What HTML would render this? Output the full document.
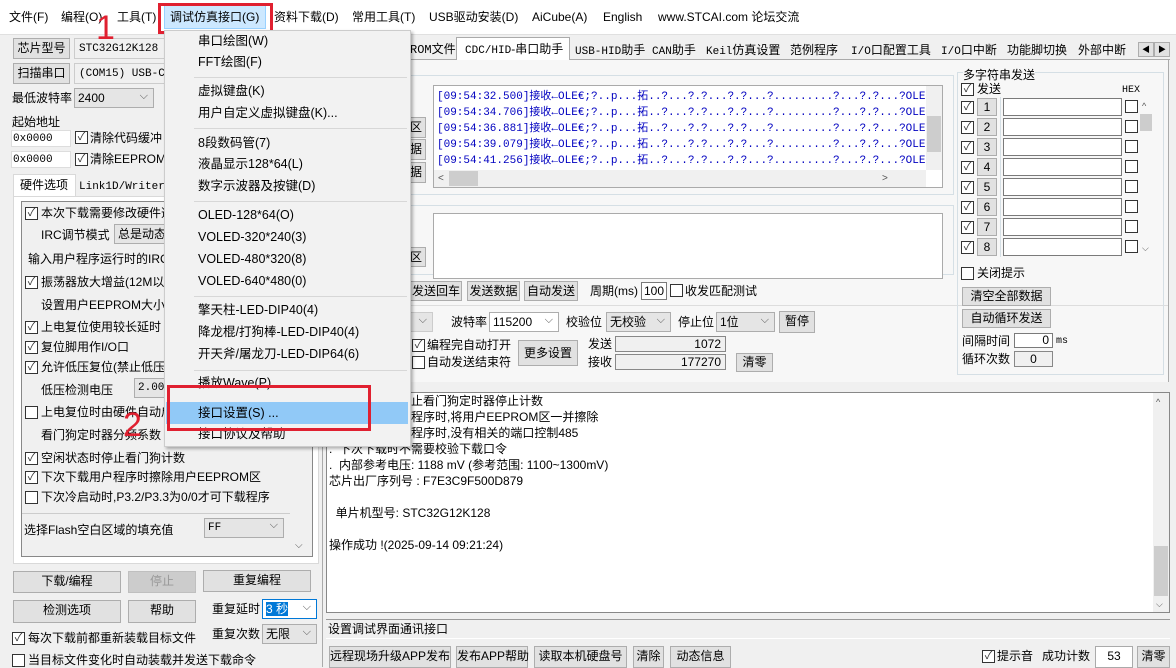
<!DOCTYPE html>
<html><head><meta charset="utf-8"><style>
*{box-sizing:border-box;margin:0;padding:0}
body{width:1176px;height:667px;overflow:hidden;background:#f0f0f0;position:relative;font:12px/16px "Liberation Sans","Noto Sans CJK SC",sans-serif;color:#000}
div,span{position:absolute;white-space:nowrap}
.t{line-height:16px}
.b{background:#e1e1e1;border:1px solid #adadad;text-align:center;line-height:18px}
.w{background:#fff;border:1px solid #7a7a7a}
.s{background:#fff;border:1px solid #adadad;padding-left:3px;line-height:18px}
.s:after{content:"⌵";position:absolute;right:5px;top:-2px;color:#555;font-size:11px}
.cb{width:13px;height:13px;border:1px solid #333;background:#fff;font-size:11px;line-height:11px;text-align:center;color:#333}
.m{font-size:12.5px;line-height:16px}
.mono{font-family:"Liberation Mono","Noto Sans CJK SC",monospace;font-size:11px}
.sep{height:1px;background:#d7d7d7;left:180px;width:226px}
.blue{color:#0000c0}
</style></head><body>
<!-- menu bar -->
<div style="left:0;top:0;width:1176px;height:34px;background:#fff"></div>
<div class="t" style="left:9px;top:9px">文件(F)</div>
<div class="t" style="left:61px;top:9px">编程(O)</div>
<div class="t" style="left:117px;top:9px">工具(T)</div>
<div style="left:164px;top:5px;width:102px;height:24px;background:#cce8ff;border:1px solid #99d1ff"></div>
<div style="left:158px;top:3px;width:115px;height:31px;border:3px solid #e02030"></div>
<div class="t" style="left:170px;top:9px">调试仿真接口(G)</div>
<div class="t" style="left:274px;top:9px">资料下载(D)</div>
<div class="t" style="left:352px;top:9px">常用工具(T)</div>
<div class="t" style="left:429px;top:9px">USB驱动安装(D)</div>
<div class="t" style="left:532px;top:9px">AiCube(A)</div>
<div class="t" style="left:603px;top:9px">English</div>
<div class="t" style="left:658px;top:9px">www.STCAI.com 论坛交流</div>
<div style="left:0;top:34px;width:1176px;height:1px;background:#e0e0e0"></div>

<!-- left panel -->
<div class="b" style="left:13px;top:38px;width:57px;height:21px">芯片型号</div>
<div class="w mono" style="left:74px;top:38px;width:100px;height:21px;background:#f0f0f0;border-color:#ccc;padding:2px 4px">STC32G12K128</div>
<div class="b" style="left:13px;top:63px;width:57px;height:21px">扫描串口</div>
<div class="w mono" style="left:74px;top:63px;width:100px;height:21px;background:#f0f0f0;border-color:#ccc;padding:2px 4px">(COM15) USB-CDC</div>
<div class="t" style="left:12px;top:90px">最低波特率</div>
<div class="s" style="left:74px;top:88px;width:80px;height:20px;background:#e5e5e5">2400</div>
<div class="t" style="left:12px;top:114px">起始地址</div>
<div class="w mono" style="left:11px;top:130px;width:60px;height:17px;border-color:#ddd;padding-left:1px">0x0000</div>
<div class="cb" style="left:75px;top:131px">✓</div><div class="t" style="left:90px;top:130px">清除代码缓冲</div>
<div class="w mono" style="left:11px;top:151px;width:60px;height:17px;border-color:#ddd;padding-left:1px">0x0000</div>
<div class="cb" style="left:75px;top:153px">✓</div><div class="t" style="left:90px;top:151px">清除EEPROM缓</div>
<div style="left:13px;top:174px;width:63px;height:23px;background:#fff;border:1px solid #d9d9d9;border-bottom:none"></div>
<div class="t" style="left:20px;top:177px">硬件选项</div>
<div class="t mono" style="left:79px;top:179px">Link1D/Writer1</div>
<div style="left:13px;top:196px;width:306px;height:368px;background:#fff;border:1px solid #d9d9d9"></div>
<div style="left:21px;top:201px;width:292px;height:356px;border:1px solid #888;background:#f0f0f0"></div>
<div class="cb" style="left:25px;top:207px">✓</div><div class="t" style="left:41px;top:205px">本次下载需要修改硬件选项</div>
<div class="t" style="left:41px;top:227px">IRC调节模式</div>
<div class="s" style="left:114px;top:224px;width:60px;height:20px;background:#e5e5e5">总是动态</div>
<div class="t" style="left:28px;top:251px">输入用户程序运行时的IRC</div>
<div class="cb" style="left:25px;top:276px">✓</div><div class="t" style="left:41px;top:274px">振荡器放大增益(12M以上)</div>
<div class="t" style="left:41px;top:297px">设置用户EEPROM大小</div>
<div class="cb" style="left:25px;top:321px">✓</div><div class="t" style="left:41px;top:319px">上电复位使用较长延时</div>
<div class="cb" style="left:25px;top:341px">✓</div><div class="t" style="left:41px;top:339px">复位脚用作I/O口</div>
<div class="cb" style="left:25px;top:361px">✓</div><div class="t" style="left:41px;top:359px">允许低压复位(禁止低压中断)</div>
<div class="t" style="left:41px;top:382px">低压检测电压</div>
<div class="s mono" style="left:134px;top:378px;width:40px;height:20px;background:#e5e5e5">2.00</div>
<div class="cb" style="left:25px;top:406px"></div><div class="t" style="left:41px;top:404px">上电复位时由硬件自动启动看门狗</div>
<div class="t" style="left:41px;top:427px">看门狗定时器分频系数</div>
<div class="cb" style="left:25px;top:452px">✓</div><div class="t" style="left:41px;top:450px">空闲状态时停止看门狗计数</div>
<div class="cb" style="left:25px;top:471px">✓</div><div class="t" style="left:41px;top:469px">下次下载用户程序时擦除用户EEPROM区</div>
<div class="cb" style="left:25px;top:491px"></div><div class="t" style="left:41px;top:489px">下次冷启动时,P3.2/P3.3为0/0才可下载程序</div>
<div style="left:22px;top:513px;width:268px;height:1px;background:#ccc"></div>
<div class="t" style="left:24px;top:522px">选择Flash空白区域的填充值</div>
<div class="s mono" style="left:204px;top:518px;width:80px;height:20px;background:#e5e5e5">FF</div>
<div class="t" style="left:295px;top:538px;font-size:10px;color:#555">⌵</div>
<div class="b" style="left:13px;top:571px;width:108px;height:22px">下载/编程</div>
<div class="b" style="left:128px;top:571px;width:68px;height:22px;background:#ccc;color:#999;border-color:#bfbfbf">停止</div>
<div class="b" style="left:203px;top:570px;width:108px;height:22px">重复编程</div>
<div class="b" style="left:13px;top:600px;width:108px;height:23px">检测选项</div>
<div class="b" style="left:128px;top:600px;width:68px;height:23px">帮助</div>
<div class="t" style="left:212px;top:601px">重复延时</div>
<div class="s" style="left:262px;top:599px;width:55px;height:20px;border-color:#0078d7"><span style="position:static;background:#0078d7;color:#fff">3 秒</span></div>
<div class="t" style="left:212px;top:626px">重复次数</div>
<div class="s" style="left:262px;top:624px;width:55px;height:20px;background:#e5e5e5">无限</div>
<div class="cb" style="left:12px;top:632px">✓</div><div class="t" style="left:28px;top:630px">每次下载前都重新装载目标文件</div>
<div class="cb" style="left:12px;top:654px"></div><div class="t" style="left:28px;top:652px">当目标文件变化时自动装载并发送下载命令</div>
<div style="left:322px;top:35px;width:1px;height:632px;background:#aaa"></div>

<!-- right tabs -->
<div style="left:400px;top:59px;width:770px;height:1px;background:#aaa"></div>
<div class="t mono" style="left:410px;top:42px;font-size:12px">ROM文件</div>
<div style="left:456px;top:37px;width:114px;height:24px;background:#fff;border:1px solid #aaa;border-bottom:none"></div>
<div class="t" style="left:465px;top:41px"><span class="mono" style="position:static">CDC/HID</span>-串口助手</div>
<div class="t" style="left:575px;top:42px"><span class="mono" style="position:static">USB-HID</span>助手</div>
<div class="t" style="left:652px;top:42px"><span class="mono" style="position:static">CAN</span>助手</div>
<div class="t" style="left:706px;top:42px"><span class="mono" style="position:static">Keil</span>仿真设置</div>
<div class="t" style="left:790px;top:42px">范例程序</div>
<div class="t" style="left:851px;top:42px"><span class="mono" style="position:static">I/O</span>口配置工具</div>
<div class="t" style="left:941px;top:42px"><span class="mono" style="position:static">I/O</span>口中断</div>
<div class="t" style="left:1007px;top:42px">功能脚切换</div>
<div class="t" style="left:1078px;top:42px">外部中断</div>
<div class="b" style="left:1138px;top:42px;width:16px;height:15px;font-size:8px;line-height:13px">◀</div>
<div class="b" style="left:1154px;top:42px;width:16px;height:15px;font-size:8px;line-height:13px">▶</div>
<div style="left:400px;top:60px;width:769px;height:322px;background:#f7f7f7;border-right:1px solid #aaa"></div>
<div style="left:410px;top:75px;width:544px;height:120px;border:1px solid #d5dfe5"></div>
<div class="b" style="left:406px;top:117px;width:20px;height:21px">区</div>
<div class="b" style="left:406px;top:139px;width:20px;height:21px">据</div>
<div class="b" style="left:406px;top:162px;width:20px;height:21px">据</div>
<div style="left:433px;top:85px;width:510px;height:103px;background:#fff;border:1px solid #aaa"></div>
<div style="left:436px;top:88px;width:490px;height:82px;overflow:hidden">
<div class="mono blue" style="left:1px;top:1px;line-height:16px;font-size:11px">[09:54:32.500]接收←OLE€;?..p...拓..?...?.?...?.?...?.........?...?.?...?OLE€;?(<br>[09:54:34.706]接收←OLE€;?..p...拓..?...?.?...?.?...?.........?...?.?...?OLE€;?(<br>[09:54:36.881]接收←OLE€;?..p...拓..?...?.?...?.?...?.........?...?.?...?OLE€;?(<br>[09:54:39.079]接收←OLE€;?..p...拓..?...?.?...?.?...?.........?...?.?...?OLE€;?(<br>[09:54:41.256]接收←OLE€;?..p...拓..?...?.?...?.?...?.........?...?.?...?OLE€;?(</div></div>
<div style="left:926px;top:86px;width:16px;height:84px;background:#f0f0f0"></div>
<div style="left:927px;top:116px;width:14px;height:36px;background:#cdcdcd"></div>
<div style="left:434px;top:170px;width:492px;height:17px;background:#f0f0f0"></div>
<div style="left:449px;top:171px;width:29px;height:15px;background:#cdcdcd"></div>
<div class="t" style="left:438px;top:171px;font-size:10px;color:#555">&lt;</div>
<div class="t" style="left:882px;top:171px;font-size:10px;color:#555">&gt;</div>
<div style="left:410px;top:205px;width:544px;height:70px;border:1px solid #d5dfe5"></div>
<div class="b" style="left:406px;top:247px;width:20px;height:20px">区</div>
<div style="left:433px;top:213px;width:510px;height:66px;background:#fff;border:1px solid #aaa"></div>
<div class="b" style="left:410px;top:281px;width:52px;height:20px">发送回车</div>
<div class="b" style="left:467px;top:281px;width:53px;height:20px">发送数据</div>
<div class="b" style="left:524px;top:281px;width:54px;height:20px">自动发送</div>
<div class="t" style="left:590px;top:283px">周期(ms)</div>
<div class="w" style="left:641px;top:282px;width:26px;height:18px;text-align:center;line-height:16px">100</div>
<div class="cb" style="left:670px;top:284px"></div><div class="t" style="left:685px;top:283px">收发匹配测试</div>
<div style="left:400px;top:305px;width:768px;height:1px;background:#ddd"></div>
<div class="s" style="left:408px;top:312px;width:25px;height:20px;background:#e5e5e5;border-color:#ccc"></div>
<div class="t" style="left:451px;top:314px">波特率</div>
<div class="s" style="left:489px;top:312px;width:70px;height:20px">115200</div>
<div class="t" style="left:566px;top:314px">校验位</div>
<div class="s" style="left:606px;top:312px;width:65px;height:20px;background:#e5e5e5">无校验</div>
<div class="t" style="left:678px;top:314px">停止位</div>
<div class="s" style="left:716px;top:312px;width:59px;height:20px;background:#e5e5e5">1位</div>
<div class="b" style="left:779px;top:311px;width:36px;height:22px">暂停</div>
<div class="cb" style="left:412px;top:339px">✓</div><div class="t" style="left:427px;top:337px">编程完自动打开</div>
<div class="cb" style="left:412px;top:356px"></div><div class="t" style="left:427px;top:354px">自动发送结束符</div>
<div class="b" style="left:518px;top:340px;width:60px;height:26px;line-height:24px">更多设置</div>
<div class="t" style="left:588px;top:336px">发送</div>
<div class="w" style="left:615px;top:336px;width:111px;height:16px;text-align:right;padding-right:4px;line-height:14px;background:#f0f0f0;border-color:#888">1072</div>
<div class="t" style="left:588px;top:354px">接收</div>
<div class="w" style="left:615px;top:354px;width:111px;height:16px;text-align:right;padding-right:4px;line-height:14px;background:#f0f0f0;border-color:#888">177270</div>
<div class="b" style="left:736px;top:353px;width:37px;height:19px;line-height:17px">清零</div>

<!-- multi string -->
<div style="left:957px;top:72px;width:207px;height:303px;border:1px solid #d5dfe5"></div>
<div class="t" style="left:963px;top:67px;background:#f7f7f7">多字符串发送</div>
<div class="cb" style="left:961px;top:83px">✓</div><div class="t" style="left:977px;top:81px">发送</div>
<div class="t mono" style="left:1122px;top:83px;font-size:10px">HEX</div>
<div style="left:1000px;top:97px;width:1px;height:160px;background:#d5dfe5"></div>
<div class="cb" style="left:961px;top:101px">✓</div><div class="b" style="left:977px;top:98px;width:20px;height:18px;line-height:16px">1</div><div class="w" style="left:1003px;top:98px;width:119px;height:18px"></div><div class="cb" style="left:1125px;top:100px"></div>
<div class="cb" style="left:961px;top:121px">✓</div><div class="b" style="left:977px;top:118px;width:20px;height:18px;line-height:16px">2</div><div class="w" style="left:1003px;top:118px;width:119px;height:18px"></div><div class="cb" style="left:1125px;top:120px"></div>
<div class="cb" style="left:961px;top:141px">✓</div><div class="b" style="left:977px;top:138px;width:20px;height:18px;line-height:16px">3</div><div class="w" style="left:1003px;top:138px;width:119px;height:18px"></div><div class="cb" style="left:1125px;top:140px"></div>
<div class="cb" style="left:961px;top:161px">✓</div><div class="b" style="left:977px;top:158px;width:20px;height:18px;line-height:16px">4</div><div class="w" style="left:1003px;top:158px;width:119px;height:18px"></div><div class="cb" style="left:1125px;top:160px"></div>
<div class="cb" style="left:961px;top:181px">✓</div><div class="b" style="left:977px;top:178px;width:20px;height:18px;line-height:16px">5</div><div class="w" style="left:1003px;top:178px;width:119px;height:18px"></div><div class="cb" style="left:1125px;top:180px"></div>
<div class="cb" style="left:961px;top:201px">✓</div><div class="b" style="left:977px;top:198px;width:20px;height:18px;line-height:16px">6</div><div class="w" style="left:1003px;top:198px;width:119px;height:18px"></div><div class="cb" style="left:1125px;top:200px"></div>
<div class="cb" style="left:961px;top:221px">✓</div><div class="b" style="left:977px;top:218px;width:20px;height:18px;line-height:16px">7</div><div class="w" style="left:1003px;top:218px;width:119px;height:18px"></div><div class="cb" style="left:1125px;top:220px"></div>
<div class="cb" style="left:961px;top:241px">✓</div><div class="b" style="left:977px;top:238px;width:20px;height:18px;line-height:16px">8</div><div class="w" style="left:1003px;top:238px;width:119px;height:18px"></div><div class="cb" style="left:1125px;top:240px"></div>
<div style="left:1140px;top:114px;width:12px;height:17px;background:#cdcdcd"></div>
<div class="t" style="left:1142px;top:98px;font-size:9px;color:#555">^</div>
<div class="t" style="left:1142px;top:240px;font-size:9px;color:#555">⌵</div>
<div class="cb" style="left:961px;top:267px"></div><div class="t" style="left:977px;top:265px">关闭提示</div>
<div class="b" style="left:962px;top:287px;width:89px;height:19px;line-height:17px">清空全部数据</div>
<div class="b" style="left:962px;top:309px;width:89px;height:19px;line-height:17px">自动循环发送</div>
<div class="t" style="left:962px;top:333px">间隔时间</div>
<div class="w" style="left:1014px;top:333px;width:39px;height:15px;text-align:right;padding-right:3px;line-height:13px">0</div>
<div class="t mono" style="left:1056px;top:334px;font-size:10px">ms</div>
<div class="t" style="left:962px;top:351px">循环次数</div>
<div class="w" style="left:1014px;top:351px;width:39px;height:16px;text-align:center;line-height:14px;background:#f0f0f0;border-color:#888">0</div>

<!-- log -->
<div style="left:326px;top:392px;width:844px;height:221px;background:#fff;border:1px solid #888"></div>
<div style="left:1153px;top:393px;width:16px;height:219px;background:#f0f0f0"></div>
<div style="left:1154px;top:546px;width:14px;height:50px;background:#cdcdcd"></div>
<div class="t" style="left:1156px;top:394px;font-size:9px;color:#555">^</div>
<div class="t" style="left:1156px;top:596px;font-size:9px;color:#555">⌵</div>
<div class="t" style="left:329px;top:393px;line-height:16px">
  .&nbsp; 空闲状态时停止看门狗定时器停止计数<br>
  .&nbsp; 下次下载用户程序时,将用户EEPROM区一并擦除<br>
  .&nbsp; 下次下载用户程序时,没有相关的端口控制485<br>
  .&nbsp; 下次下载时不需要校验下载口令<br>
  .&nbsp; 内部参考电压: 1188 mV (参考范围: 1100~1300mV)<br>
  芯片出厂序列号 : F7E3C9F500D879<br><br>
  &nbsp;&nbsp;单片机型号: STC32G12K128<br><br>
  操作成功 !(2025-09-14 09:21:24)</div>
<div style="left:326px;top:619px;width:844px;height:1px;background:#999"></div>
<div class="t" style="left:328px;top:621px">设置调试界面通讯接口</div>
<div style="left:326px;top:638px;width:844px;height:1px;background:#fff"></div>
<div class="b" style="left:329px;top:646px;width:122px;height:22px">远程现场升级APP发布</div>
<div class="b" style="left:456px;top:646px;width:72px;height:22px">发布APP帮助</div>
<div class="b" style="left:534px;top:646px;width:93px;height:22px">读取本机硬盘号</div>
<div class="b" style="left:633px;top:646px;width:31px;height:22px">清除</div>
<div class="b" style="left:670px;top:646px;width:61px;height:22px">动态信息</div>
<div class="cb" style="left:982px;top:650px">✓</div><div class="t" style="left:997px;top:648px">提示音</div>
<div class="t" style="left:1042px;top:648px">成功计数</div>
<div class="w" style="left:1095px;top:646px;width:38px;height:22px;text-align:center;line-height:18px;border-color:#aaa">53</div>
<div class="b" style="left:1137px;top:646px;width:33px;height:22px">清零</div>

<!-- dropdown -->
<div style="left:164px;top:30px;width:247px;height:417px;background:#f2f2f2;border:1px solid #ccc;box-shadow:2px 2px 3px rgba(0,0,0,.3)"></div>
<div class="t m" style="left:198px;top:33px">串口绘图(W)</div>
<div class="t m" style="left:198px;top:54px">FFT绘图(F)</div>
<div class="sep" style="top:77px;left:194px;width:213px"></div>
<div class="t m" style="left:198px;top:83px">虚拟键盘(K)</div>
<div class="t m" style="left:198px;top:105px">用户自定义虚拟键盘(K)...</div>
<div class="sep" style="top:128px;left:194px;width:213px"></div>
<div class="t m" style="left:198px;top:135px">8段数码管(7)</div>
<div class="t m" style="left:198px;top:156px">液晶显示128*64(L)</div>
<div class="t m" style="left:198px;top:178px">数字示波器及按键(D)</div>
<div class="sep" style="top:201px;left:194px;width:213px"></div>
<div class="t m" style="left:198px;top:207px">OLED-128*64(O)</div>
<div class="t m" style="left:198px;top:229px">VOLED-320*240(3)</div>
<div class="t m" style="left:198px;top:251px">VOLED-480*320(8)</div>
<div class="t m" style="left:198px;top:273px">VOLED-640*480(0)</div>
<div class="sep" style="top:296px;left:194px;width:213px"></div>
<div class="t m" style="left:198px;top:302px">擎天柱-LED-DIP40(4)</div>
<div class="t m" style="left:198px;top:324px">降龙棍/打狗棒-LED-DIP40(4)</div>
<div class="t m" style="left:198px;top:346px">开天斧/屠龙刀-LED-DIP64(6)</div>
<div class="sep" style="top:370px;left:194px;width:213px"></div>
<div class="t m" style="left:198px;top:375px">播放Wave(P)</div>
<div style="left:166px;top:402px;width:242px;height:22px;background:#91c9f7"></div>
<div class="t m" style="left:198px;top:405px">接口设置(S) ...</div>
<div class="t m" style="left:198px;top:426px">接口协议及帮助</div>
<div style="left:167px;top:385px;width:204px;height:46px;border:3px solid #e02030"></div>
<div class="t" style="left:96px;top:8px;font-size:34px;line-height:40px;color:#e02030;font-family:'Liberation Sans',sans-serif">1</div>
<div class="t" style="left:123px;top:405px;font-size:34px;line-height:40px;color:#e02030;font-family:'Liberation Sans',sans-serif">2</div>
</body></html>
